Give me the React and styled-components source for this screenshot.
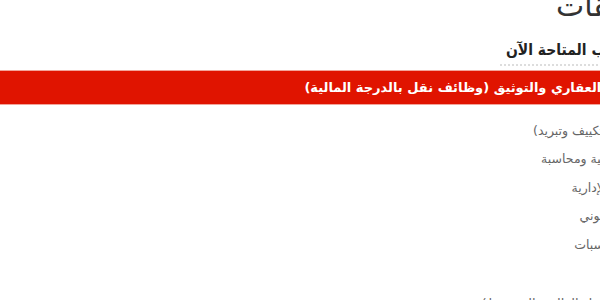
import styled, { createGlobalStyle } from 'styled-components'

const Global = createGlobalStyle`
  html, body {
    margin: 0;
    background: #fff;
    overflow: hidden;
  }
  body {
    width: 600px;
    height: 300px;
  }
`

const Page = styled.div`
  direction: rtl;
  width: 900px;
  font-family: "DejaVu Sans", sans-serif;
`

const Title = styled.h1`
  margin: -12px 0 0;
  padding-right: 83px;
  font-size: 30px;
  font-weight: normal;
  color: #333;
  line-height: 36px;
`

const SubTitle = styled.h3`
  margin: 15px 0 0;
  padding-right: 250px;
  font-family: "DejaVu Sans Condensed", "DejaVu Sans", sans-serif;
  font-size: 15.5px;
  font-weight: bold;
  color: #222;
  line-height: 22px;
`

const Dots = styled.div`
  margin: 3px 230px 0 0;
  width: 170px;
  border-top: 2px dotted #ddd;
`

const Bar = styled.div`
  margin-top: 4px;
  height: 33px;
  background: #e01400;
  border-top: 1px solid #f2a49a;
  border-bottom: 1px solid #f2a49a;
  display: flex;
  align-items: center;
  padding-right: 207px;
  color: #fff;
  font-size: 13px;
  font-weight: bold;
`

const List = styled.ul`
  list-style: none;
  margin: 12px 0 0;
  padding: 0 207px 0 0;
`

const Item = styled.li`
  height: 28.4px;
  line-height: 28px;
  font-size: 12.5px;
  color: #666;
`

const Next = styled.div`
  margin-top: 37px;
  padding-right: 228px;
  font-size: 13px;
  color: #666;
`

const jobs = [
  'مهندس ميكانيكا (تكييف وتبريد)',
  'أخصائي شئون مالية ومحاسبة',
  'أخصائي الشئون الإدارية',
  'أخصائي تحقيق قانوني',
  'أخصائي نظم الحاسبات',
]

export default function App() {
  return (
    <>
      <Global />
      <Page>
        <Title>الوظائف والمسابقات</Title>
        <SubTitle>المناصب المتاحة الآن</SubTitle>
        <Dots />
        <Bar>مصلحة الشهر العقاري والتوثيق (وظائف نقل بالدرجة المالية)</Bar>
        <List>
          {jobs.map((j) => (
            <Item key={j}>{j}</Item>
          ))}
        </List>
        <Next>(وظائف بالمؤهل العالي والمتوسط)</Next>
      </Page>
    </>
  )
}
